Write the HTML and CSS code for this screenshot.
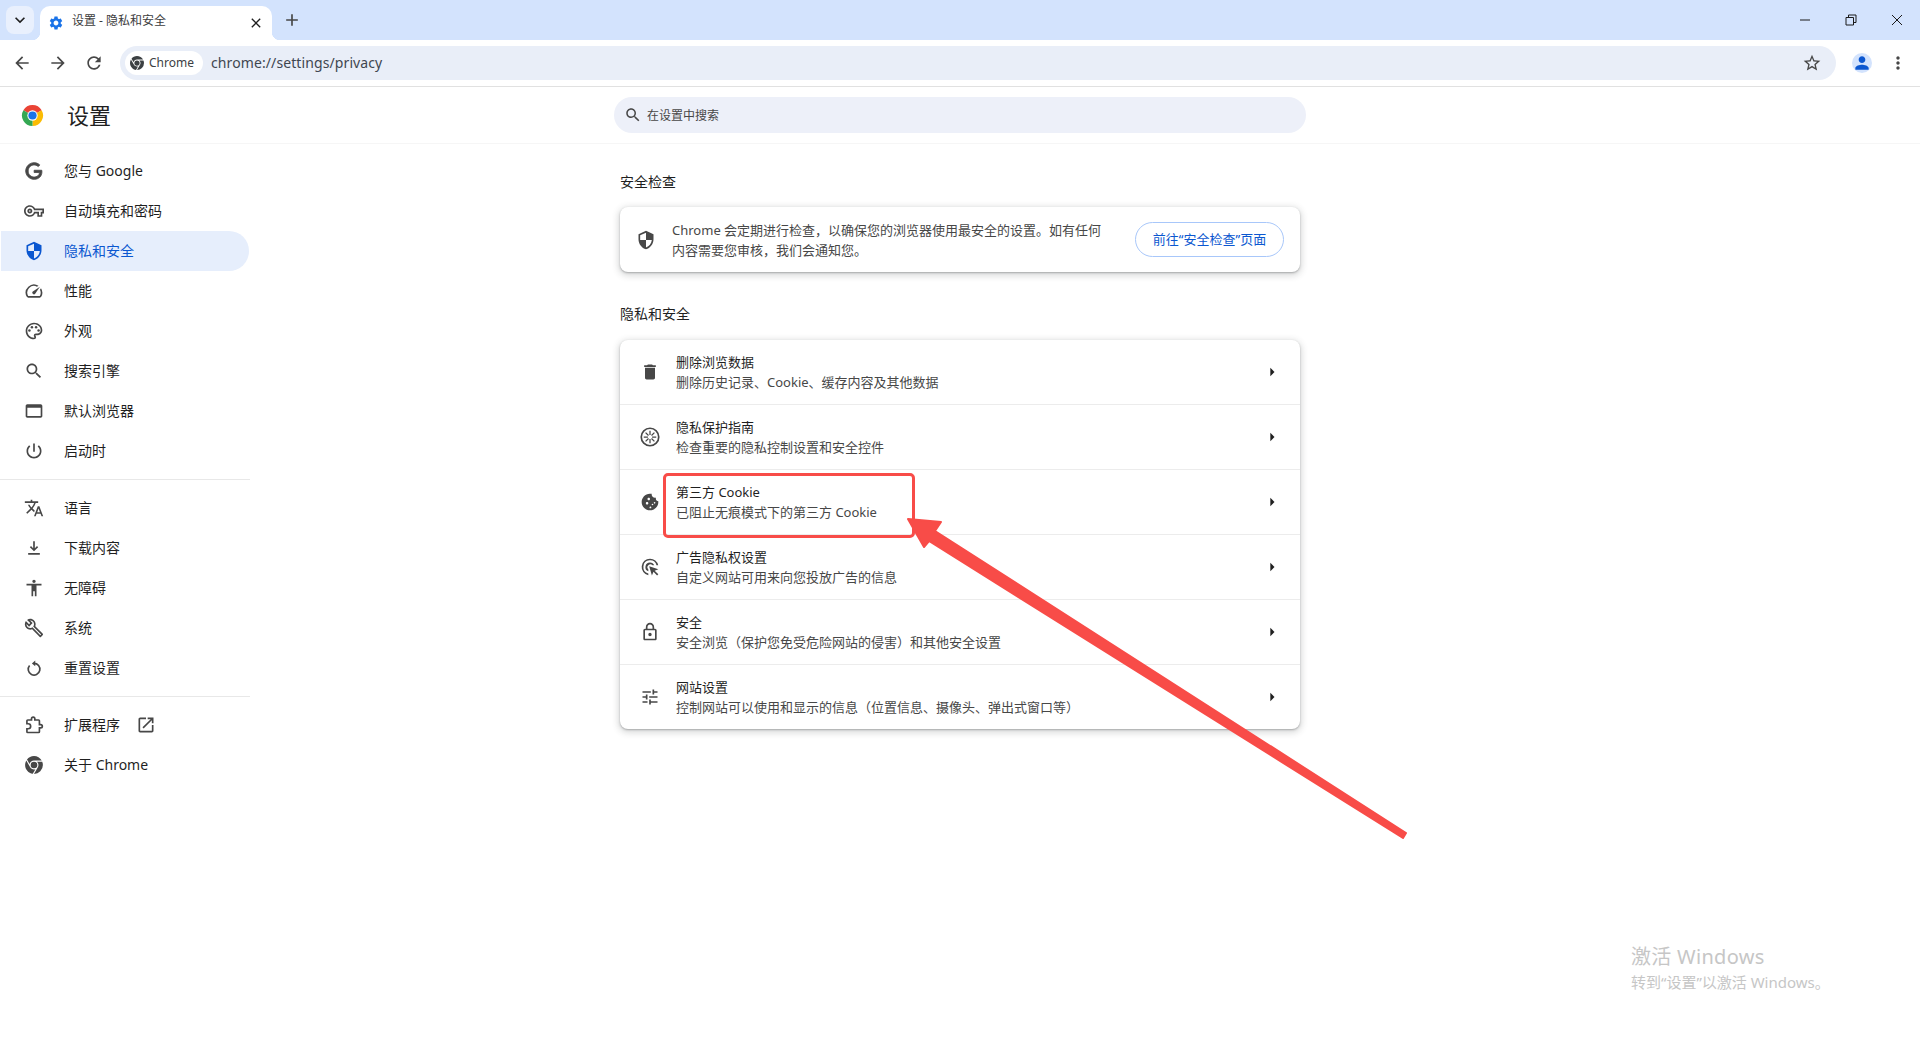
FILE: index.html
```html
<!DOCTYPE html>
<html lang="zh-CN">
<head>
    <meta charset="UTF-8">
    <title>设置 - 隐私和安全</title>
    <link rel="stylesheet" href="styles.css">
</head>
<body>
    <!-- 标签栏 -->
    <div class="tabstrip">
        <div class="tab-search">
            <svg class="icon" viewBox="0 0 24 24"><path d="M7.4 8.6 12 13.2l4.6-4.6L18 10l-6 6-6-6z"/></svg>
        </div>
        <div class="tab">
            <svg class="tab-favicon" viewBox="0 0 24 24"><path d="M19.14 12.94c.04-.3.06-.61.06-.94 0-.32-.02-.64-.07-.94l2.03-1.58c.18-.14.23-.41.12-.61l-1.92-3.32c-.12-.22-.37-.29-.59-.22l-2.39.96c-.5-.38-1.03-.7-1.62-.94l-.36-2.54c-.04-.24-.24-.41-.48-.41h-3.84c-.24 0-.43.17-.47.41l-.36 2.54c-.59.24-1.13.57-1.62.94l-2.39-.96c-.22-.08-.47 0-.59.22L2.74 8.87c-.12.21-.08.47.12.61l2.03 1.58c-.05.3-.09.63-.09.94s.02.64.07.94l-2.03 1.58c-.18.14-.23.41-.12.61l1.92 3.32c.12.22.37.29.59.22l2.39-.96c.5.38 1.03.7 1.62.94l.36 2.54c.05.24.24.41.48.41h3.84c.24 0 .44-.17.47-.41l.36-2.54c.59-.24 1.13-.56 1.62-.94l2.39.96c.22.08.47 0 .59-.22l1.92-3.32c.12-.22.07-.47-.12-.61l-2.01-1.58zM12 15.6c-1.98 0-3.6-1.62-3.6-3.6s1.62-3.6 3.6-3.6 3.6 1.62 3.6 3.6-1.62 3.6-3.6 3.6z"/></svg>
            <span class="tab-title">设置 - 隐私和安全</span>
            <svg class="tab-close" viewBox="0 0 24 24"><path d="M19 6.4 17.6 5 12 10.6 6.4 5 5 6.4l5.600 5.600L5 17.600 6.400 19l5.600-5.600 5.600 5.600 1.400-1.400-5.600-5.600z"/></svg>
        </div>
        <div class="tab-new">
            <svg class="icon" viewBox="0 0 24 24"><path d="M19 13h-6v6h-2v-6H5v-2h6V5h2v6h6z"/></svg>
        </div>
        <div class="window-controls">
            <div class="win-btn"><svg viewBox="0 0 12 12"><path d="M1 6h10"/></svg></div>
            <div class="win-btn"><svg viewBox="0 0 12 12"><path d="M1 3.500h7.500V11H1zM3.500 3.500V1H11v7.500H8.500"/></svg></div>
            <div class="win-btn"><svg viewBox="0 0 12 12"><path d="M1 1l10 10M11 1 1 11"/></svg></div>
        </div>
    </div>

    <!-- 工具栏 -->
    <div class="toolbar">
        <div class="nav-btn"><svg class="icon" viewBox="0 0 24 24"><path d="M20 11H7.830l5.590-5.590L12 4l-8 8 8 8 1.410-1.410L7.830 13H20v-2z"/></svg></div>
        <div class="nav-btn"><svg class="icon" viewBox="0 0 24 24"><path d="M12 4l-1.410 1.410L16.170 11H4v2h12.170l-5.580 5.590L12 20l8-8z"/></svg></div>
        <div class="nav-btn"><svg class="icon" viewBox="0 0 24 24"><path d="M17.650 6.350C16.200 4.900 14.210 4 12 4c-4.420 0-7.990 3.580-7.990 8s3.570 8 7.990 8c3.730 0 6.840-2.550 7.730-6h-2.080c-.82 2.330-3.040 4-5.650 4-3.310 0-6-2.690-6-6s2.690-6 6-6c1.660 0 3.140.69 4.220 1.780L13 11h7V4l-2.350 2.350z"/></svg></div>
        <div class="omnibox">
            <div class="chip">
                <svg class="chip-icon" viewBox="4 4 16 16"><path d="M12,20L15.460,14H15.450C15.790,13.410 16,12.730 16,12C16,10.800 15.460,9.730 14.620,9H19.410C19.790,9.930 20,10.940 20,12A8,8 0 0,1 12,20M4,12C4,10.540 4.390,9.180 5.070,8L8.540,14H8.550C9.240,15.190 10.500,16 12,16C12.450,16 12.880,15.910 13.290,15.770L10.890,19.910C7,19.370 4,16.040 4,12M15,12A3,3 0 0,1 12,15A3,3 0 0,1 9,12A3,3 0 0,1 12,9A3,3 0 0,1 15,12M12,4C14.960,4 17.540,5.610 18.920,8H12C10.060,8 8.450,9.380 8.080,11.210L5.700,7.080C7.140,5.210 9.430,4 12,4Z"/></svg>
                <span>Chrome</span>
            </div>
            <span class="url">chrome://settings/privacy</span>
            <svg class="icon star" viewBox="0 0 24 24"><path d="M22 9.240l-7.190-.62L12 2 9.190 8.630 2 9.240l5.460 4.730L5.820 21 12 17.270 18.180 21l-1.630-7.030L22 9.240zM12 15.400l-3.760 2.270 1-4.280-3.320-2.880 4.380-.38L12 6.100l1.710 4.040 4.380.38-3.320 2.880 1 4.280L12 15.400z"/></svg>
        </div>
        <div class="avatar"><svg viewBox="0 0 24 24"><path d="M12 12c2.210 0 4-1.790 4-4s-1.790-4-4-4-4 1.790-4 4 1.790 4 4 4zm0 2c-2.670 0-8 1.340-8 4v2h16v-2c0-2.660-5.330-4-8-4z"/></svg></div>
        <div class="nav-btn"><svg class="icon" viewBox="0 0 24 24"><path d="M12 8c1.100 0 2-.9 2-2s-.9-2-2-2-2 .9-2 2 .9 2 2 2zm0 2c-1.100 0-2 .9-2 2s.9 2 2 2 2-.9 2-2-.9-2-2-2zm0 6c-1.100 0-2 .9-2 2s.9 2 2 2 2-.9 2-2-.9-2-2-2z"/></svg></div>
    </div>

    <!-- 设置页头 -->
    <div class="settings-header">
        <div class="brand">
            <svg class="brand-logo" viewBox="0 0 24 24">
                <path fill="#ea4335" d="M12 12 2.470 6.500A11 11 0 0 1 21.530 6.500z"/>
                <path fill="#fbbc04" d="M12 12 21.530 6.500A11 11 0 0 1 12 23z"/>
                <path fill="#34a853" d="M12 12 12 23A11 11 0 0 1 2.470 6.500z"/>
                <circle cx="12" cy="12" r="5.400" fill="#fff"/>
                <circle cx="12" cy="12" r="4.300" fill="#1a73e8"/>
            </svg>
            <span class="brand-title">设置</span>
        </div>
        <div class="search">
            <svg class="search-icon" viewBox="0 0 24 24"><path d="M15.500 14h-.79l-.28-.27C15.410 12.590 16 11.110 16 9.500 16 5.910 13.090 3 9.500 3S3 5.910 3 9.500 5.910 16 9.500 16c1.610 0 3.090-.59 4.230-1.570l.27.28v.79l5 4.990L20.490 19l-4.990-5zm-6 0C7.010 14 5 11.990 5 9.500S7.010 5 9.500 5 14 7.010 14 9.500 11.990 14 9.500 14z"/></svg>
            <span class="search-text">在设置中搜索</span>
        </div>
    </div>

    <div class="page">
        <!-- 左侧菜单 -->
        <nav class="sidebar">
            <div class="menu-item">
                <svg class="icon bold" viewBox="0 0 24 24"><path d="M21.350,11.100H12.180V13.830H18.690C18.360,17.640 15.190,19.270 12.190,19.270C8.360,19.270 5,16.250 5,12C5,7.900 8.200,4.730 12.200,4.730C15.290,4.730 17.100,6.700 17.100,6.700L19,4.720C19,4.720 16.560,2 12.100,2C6.420,2 2.030,6.800 2.030,12C2.030,17.050 6.160,22 12.250,22C17.600,22 21.500,18.330 21.500,12.910C21.500,11.760 21.350,11.100 21.350,11.100V11.100Z"/></svg>
                <span>您与 Google</span>
            </div>
            <div class="menu-item">
                <svg class="icon" viewBox="0 0 24 24"><path d="M22 19h-6v-4h-2.680c-1.140 2.420-3.600 4-6.320 4-3.860 0-7-3.140-7-7s3.140-7 7-7c2.720 0 5.170 1.580 6.320 4H24v6h-2v4zm-4-2h2v-4h2v-2H11.940l-.23-.67C11.010 8.340 9.110 7 7 7c-2.760 0-5 2.240-5 5s2.240 5 5 5c2.110 0 4.010-1.340 4.710-3.330l.23-.67H18v4zM7 15c-1.650 0-3-1.350-3-3s1.350-3 3-3 3 1.350 3 3-1.350 3-3 3zm0-4c-.55 0-1 .45-1 1s.45 1 1 1 1-.45 1-1-.45-1-1-1z"/></svg>
                <span>自动填充和密码</span>
            </div>
            <div class="menu-item active">
                <svg class="icon" viewBox="0 0 24 24"><path d="M12 1 3 5v6c0 5.550 3.840 10.740 9 12 5.160-1.260 9-6.450 9-12V5l-9-4zm0 10.990h7c-.53 4.120-3.280 7.790-7 8.940V12H5V6.300l7-3.110v8.800z"/></svg>
                <span>隐私和安全</span>
            </div>
            <div class="menu-item">
                <svg class="icon" viewBox="0 0 24 24"><path d="M20.380 8.570l-1.230 1.850a8 8 0 0 1-.22 7.580H5.070A8 8 0 0 1 15.580 6.850l1.850-1.230A10 10 0 0 0 3.350 19a2 2 0 0 0 1.720 1h13.850a2 2 0 0 0 1.740-1 10 10 0 0 0-.27-10.440zM10.590 15.410a2 2 0 0 0 2.830 0l5.660-8.490-8.490 5.660a2 2 0 0 0 0 2.830z"/></svg>
                <span>性能</span>
            </div>
            <div class="menu-item">
                <svg class="icon" viewBox="0 0 24 24"><path d="M12 22C6.490 22 2 17.510 2 12S6.490 2 12 2s10 4.040 10 9c0 3.310-2.690 6-6 6h-1.770c-.28 0-.5.22-.5.5 0 .12.05.23.13.33.41.47.64 1.060.64 1.670A2.500 2.500 0 0 1 12 22zm0-18c-4.410 0-8 3.590-8 8s3.590 8 8 8c.28 0 .5-.22.5-.5a.54.54 0 0 0-.14-.35c-.41-.46-.63-1.050-.63-1.650a2.500 2.500 0 0 1 2.500-2.500H16c2.210 0 4-1.790 4-4 0-3.860-3.590-7-8-7z"/><circle cx="6.500" cy="11.500" r="1.500"/><circle cx="9.500" cy="7.500" r="1.500"/><circle cx="14.500" cy="7.500" r="1.500"/><circle cx="17.500" cy="11.500" r="1.500"/></svg>
                <span>外观</span>
            </div>
            <div class="menu-item">
                <svg class="icon" viewBox="0 0 24 24"><path d="M15.500 14h-.79l-.28-.27C15.410 12.590 16 11.110 16 9.500 16 5.910 13.090 3 9.500 3S3 5.910 3 9.500 5.910 16 9.500 16c1.610 0 3.090-.59 4.230-1.570l.27.28v.79l5 4.990L20.490 19l-4.990-5zm-6 0C7.010 14 5 11.990 5 9.500S7.010 5 9.500 5 14 7.010 14 9.500 11.990 14 9.500 14z"/></svg>
                <span>搜索引擎</span>
            </div>
            <div class="menu-item">
                <svg class="icon" viewBox="0 0 24 24"><path d="M20 4H4c-1.100 0-2 .9-2 2v12c0 1.100.9 2 2 2h16c1.100 0 2-.9 2-2V6c0-1.100-.9-2-2-2zm0 14H4V8h16v10z"/></svg>
                <span>默认浏览器</span>
            </div>
            <div class="menu-item">
                <svg class="icon" viewBox="0 0 24 24"><path d="M13 3h-2v10h2V3zm4.830 2.170l-1.420 1.420C17.990 7.860 19 9.810 19 12c0 3.870-3.130 7-7 7s-7-3.130-7-7c0-2.190 1.010-4.140 2.580-5.420L6.170 5.170C4.230 6.820 3 9.260 3 12c0 4.970 4.030 9 9 9s9-4.030 9-9c0-2.740-1.230-5.180-3.170-6.830z"/></svg>
                <span>启动时</span>
            </div>
            <div class="menu-divider"></div>
            <div class="menu-item">
                <svg class="icon" viewBox="0 0 24 24"><path d="M12.870 15.070l-2.540-2.510.03-.03c1.740-1.940 2.980-4.170 3.710-6.530H17V4h-7V2H8v2H1v1.990h11.170C11.500 7.920 10.440 9.750 9 11.350 8.070 10.320 7.300 9.190 6.690 8h-2c.73 1.630 1.730 3.170 2.980 4.560l-5.090 5.020L4 19l5-5 3.110 3.110.76-2.040zM18.500 10h-2L12 22h2l1.120-3h4.750L21 22h2l-4.500-12zm-2.620 7l1.620-4.330L19.120 17h-3.240z"/></svg>
                <span>语言</span>
            </div>
            <div class="menu-item">
                <svg class="icon" viewBox="0 0 24 24"><path d="M12 16l-5-5 1.400-1.400 2.600 2.600V4h2v8.200l2.600-2.600L17 11zM5 18h14v2H5z"/></svg>
                <span>下载内容</span>
            </div>
            <div class="menu-item">
                <svg class="icon" viewBox="0 0 24 24"><path d="M12 2c1.100 0 2 .9 2 2s-.9 2-2 2-2-.9-2-2 .9-2 2-2zm9 7h-6v13h-2v-6h-2v6H9V9H3V7h18v2z"/></svg>
                <span>无障碍</span>
            </div>
            <div class="menu-item">
                <svg class="icon" viewBox="0 0 24 24"><path d="M22.610 18.990l-9.080-9.080c.93-2.340.45-5.100-1.440-7C9.790.61 6.210.4 3.660 2.260L7.500 6.110 6.080 7.520 2.250 3.690C.39 6.230.6 9.820 2.900 12.110c1.860 1.860 4.570 2.350 6.890 1.480l9.110 9.110c.39.39 1.020.39 1.410 0l2.300-2.300c.4-.38.4-1.010 0-1.410zm-3 1.600l-9.460-9.460c-.61.45-1.290.72-2 .82-1.360.2-2.790-.21-3.830-1.250C3.370 9.760 2.930 8.500 3 7.260l3.090 3.090 4.240-4.240-3.090-3.090c1.240-.07 2.490.37 3.440 1.310 1.080 1.080 1.490 2.570 1.240 3.960-.12.71-.42 1.370-.88 1.960l9.450 9.450-.88.88z"/></svg>
                <span>系统</span>
            </div>
            <div class="menu-item">
                <svg class="icon" viewBox="0 0 24 24"><path class="reset-arc" d="M12 6.500A7 7 0 1 1 6.700 9"/><path d="M13.500 3 9.500 6.500l4 3.500z"/></svg>
                <span>重置设置</span>
            </div>
            <div class="menu-divider"></div>
            <div class="menu-item">
                <svg class="icon line" viewBox="0 0 24 24"><path d="M4.500 6H9V4.500a2 2 0 0 1 4 0V6h4.500a1 1 0 0 1 1 1v4.500H20a2 2 0 0 1 0 4h-1.500V20a1 1 0 0 1-1 1H4.500a1 1 0 0 1-1-1v-3.500H5a3 3 0 0 0 0-6H3.500V7a1 1 0 0 1 1-1z"/></svg>
                <span>扩展程序</span>
                <svg class="icon external" viewBox="0 0 24 24"><path d="M19 19H5V5h7V3H5c-1.110 0-2 .9-2 2v14c0 1.100.89 2 2 2h14c1.100 0 2-.9 2-2v-7h-2v7zM14 3v2h3.590l-9.830 9.830 1.410 1.410L19 6.410V10h2V3h-7z"/></svg>
            </div>
            <div class="menu-item">
                <svg class="icon" viewBox="3 3 18 18"><path d="M12,20L15.460,14H15.450C15.790,13.410 16,12.730 16,12C16,10.800 15.460,9.730 14.620,9H19.410C19.790,9.930 20,10.940 20,12A8,8 0 0,1 12,20M4,12C4,10.540 4.390,9.180 5.070,8L8.540,14H8.550C9.240,15.190 10.500,16 12,16C12.450,16 12.880,15.910 13.290,15.770L10.890,19.910C7,19.370 4,16.040 4,12M15,12A3,3 0 0,1 12,15A3,3 0 0,1 9,12A3,3 0 0,1 12,9A3,3 0 0,1 15,12M12,4C14.960,4 17.540,5.610 18.920,8H12C10.060,8 8.450,9.380 8.080,11.210L5.700,7.080C7.140,5.210 9.430,4 12,4Z"/></svg>
                <span>关于 Chrome</span>
            </div>
        </nav>

        <!-- 主内容 -->
        <main class="content">
            <h2 class="section-title first">安全检查</h2>
            <section class="card check-card">
                <svg class="icon" viewBox="0 0 24 24"><path d="M12 1 3 5v6c0 5.550 3.840 10.740 9 12 5.160-1.260 9-6.450 9-12V5l-9-4zm0 10.990h7c-.53 4.120-3.280 7.790-7 8.940V12H5V6.300l7-3.110v8.800z"/></svg>
                <p class="check-text">Chrome 会定期进行检查，以确保您的浏览器使用最安全的设置。如有任何内容需要您审核，我们会通知您。</p>
                <div class="check-btn">前往“安全检查”页面</div>
            </section>

            <h2 class="section-title">隐私和安全</h2>
            <section class="card">
                <div class="row">
                    <svg class="icon" viewBox="0 0 24 24"><path d="M6 19c0 1.100.9 2 2 2h8c1.100 0 2-.9 2-2V7H6v12zM19 4h-3.500l-1-1h-5l-1 1H5v2h14V4z"/></svg>
                    <div class="row-text">
                        <div class="row-title">删除浏览数据</div>
                        <div class="row-sub">删除历史记录、Cookie、缓存内容及其他数据</div>
                    </div>
                    <svg class="icon chevron" viewBox="0 0 24 24"><path d="M10 17l5-5-5-5z"/></svg>
                </div>
                <div class="row">
                    <svg class="icon line" viewBox="0 0 24 24"><circle cx="12" cy="12" r="10.500"/><path class="spokes" d="M12 4.500v5M12 14.500v5M4.500 12h5M14.500 12h5M6.700 6.700l3.500 3.500M13.800 13.800l3.500 3.500M17.300 6.700l-3.500 3.500M10.200 13.800l-3.500 3.500"/></svg>
                    <div class="row-text">
                        <div class="row-title">隐私保护指南</div>
                        <div class="row-sub">检查重要的隐私控制设置和安全控件</div>
                    </div>
                    <svg class="icon chevron" viewBox="0 0 24 24"><path d="M10 17l5-5-5-5z"/></svg>
                </div>
                <div class="row">
                    <svg class="icon" viewBox="0 0 24 24"><path d="M21.950 10.990c-1.790-.03-3.700-1.950-2.680-4.220-2.970 1-5.780-1.590-5.190-4.560C7.110.74 2 6.410 2 12c0 5.520 4.480 10 10 10 5.890 0 10.540-5.080 9.950-11.010zM8.500 15c-.83 0-1.500-.67-1.500-1.500S7.670 12 8.500 12s1.500.67 1.500 1.500S9.330 15 8.500 15zm2-5C9.670 10 9 9.330 9 8.500S9.670 7 10.500 7s1.500.67 1.500 1.500-.67 1.500-1.500 1.500zm4.500 6c-.55 0-1-.45-1-1s.45-1 1-1 1 .45 1 1-.45 1-1 1z"/><circle class="cookie-dot" cx="12.500" cy="18.500" r="1.100"/><circle class="cookie-dot" cx="17.500" cy="13" r="1"/></svg>
                    <div class="row-text">
                        <div class="row-title">第三方 Cookie</div>
                        <div class="row-sub">已阻止无痕模式下的第三方 Cookie</div>
                    </div>
                    <svg class="icon chevron" viewBox="0 0 24 24"><path d="M10 17l5-5-5-5z"/></svg>
                </div>
                <div class="row">
                    <svg class="icon" viewBox="0 0 24 24"><path d="M12 2a10 10 0 0 0-2 19.800v-2.050A8 8 0 1 1 19.800 10h2.050A10 10 0 0 0 12 2z"/><path d="M12 6.500a5.500 5.500 0 0 0-2 10.620v-2.200A3.500 3.500 0 1 1 15 10h2.100A5.500 5.500 0 0 0 12 6.500z"/><path d="M11 11l11 3.700-4.400 1.700 4.400 4.300-1.500 1.500-4.300-4.400-1.900 4.400z"/></svg>
                    <div class="row-text">
                        <div class="row-title">广告隐私权设置</div>
                        <div class="row-sub">自定义网站可用来向您投放广告的信息</div>
                    </div>
                    <svg class="icon chevron" viewBox="0 0 24 24"><path d="M10 17l5-5-5-5z"/></svg>
                </div>
                <div class="row">
                    <svg class="icon" viewBox="0 0 24 24"><path d="M18 8h-1V6c0-2.760-2.240-5-5-5S7 3.240 7 6v2H6c-1.100 0-2 .9-2 2v10c0 1.100.9 2 2 2h12c1.100 0 2-.9 2-2V10c0-1.100-.9-2-2-2zM9 6c0-1.660 1.340-3 3-3s3 1.340 3 3v2H9V6zm9 14H6V10h12v10zm-6-3c1.100 0 2-.9 2-2s-.9-2-2-2-2 .9-2 2 .9 2 2 2z"/></svg>
                    <div class="row-text">
                        <div class="row-title">安全</div>
                        <div class="row-sub">安全浏览（保护您免受危险网站的侵害）和其他安全设置</div>
                    </div>
                    <svg class="icon chevron" viewBox="0 0 24 24"><path d="M10 17l5-5-5-5z"/></svg>
                </div>
                <div class="row">
                    <svg class="icon" viewBox="0 0 24 24"><path d="M3 17v2h6v-2H3zM3 5v2h10V5H3zm10 16v-2h8v-2h-8v-2h-2v6h2zM7 9v2H3v2h4v2h2V9H7zm14 4v-2H11v2h10zm-6-4h2V7h4V5h-4V3h-2v6z"/></svg>
                    <div class="row-text">
                        <div class="row-title">网站设置</div>
                        <div class="row-sub">控制网站可以使用和显示的信息（位置信息、摄像头、弹出式窗口等）</div>
                    </div>
                    <svg class="icon chevron" viewBox="0 0 24 24"><path d="M10 17l5-5-5-5z"/></svg>
                </div>
            </section>
        </main>
    </div>

    <!-- 截图标注 -->
    <div class="mark-box"></div>
    <svg class="mark-arrow" viewBox="0 0 1920 1039">
        <polygon points="908,519 941,522 935,531 1406,833 1403,838 929,541 924,547"/>
    </svg>

    <div class="watermark">
        <div class="watermark-title">激活 Windows</div>
        <div class="watermark-sub">转到“设置”以激活 Windows。</div>
    </div>
</body>
</html>
```

FILE: styles.css
```css
* {
    margin: 0;
    padding: 0;
    box-sizing: border-box;
}

body {
    position: relative;
    height: 1039px;
    overflow: hidden;
    background: #fff;
    color: #1f1f1f;
    font-family: "Noto Sans", "Noto Sans CJK SC", sans-serif;
    font-size: 13px;
    line-height: 20px;
}

.icon {
    width: 20px;
    height: 20px;
    flex: none;
    fill: #474747;
}

.icon.line {
    fill: none;
    stroke: #474747;
    stroke-width: 2;
}

.icon.bold {
    stroke: #474747;
    stroke-width: 1;
}

.reset-arc {
    fill: none;
    stroke: #474747;
    stroke-width: 2;
}

.cookie-dot {
    fill: #fff;
}

/* tab strip */
.tabstrip {
    display: flex;
    height: 40px;
    background: #d3e3fd;
}

.tab-search {
    display: flex;
    align-items: center;
    justify-content: center;
    width: 28px;
    height: 28px;
    margin: 6px 6px 0;
    border-radius: 8px;
    background: #e9f0fd;
}

.tab-search .icon {
    fill: #1f1f1f;
}

.tab {
    position: relative;
    display: flex;
    align-items: center;
    width: 232px;
    height: 34px;
    margin-top: 6px;
    padding: 0 8px;
    border-radius: 10px 10px 0 0;
    background: #fff;
}

.tab::before,
.tab::after {
    content: "";
    position: absolute;
    bottom: 0;
    width: 8px;
    height: 8px;
}

.tab::before {
    left: -8px;
    background: radial-gradient(circle at 0 0, #d3e3fd 8px, #fff 8.5px);
}

.tab::after {
    right: -8px;
    background: radial-gradient(circle at 100% 0, #d3e3fd 8px, #fff 8.5px);
}

.tab-favicon {
    width: 16px;
    height: 16px;
    flex: none;
    fill: #1a73e8;
}

.tab-title {
    flex: 1;
    margin-left: 8px;
    padding-bottom: 4px;
    font-size: 12px;
    line-height: 16px;
    color: #3c3c3c;
}

.tab-close {
    width: 16px;
    height: 16px;
    flex: none;
    fill: #1f1f1f;
}

.tab-new {
    display: flex;
    align-items: center;
    justify-content: center;
    width: 28px;
    height: 28px;
    margin: 6px 0 0 6px;
}

.window-controls {
    display: flex;
    margin-left: auto;
}

.win-btn {
    display: flex;
    align-items: center;
    justify-content: center;
    width: 46px;
    height: 40px;
}

.win-btn svg {
    width: 12px;
    height: 12px;
    fill: none;
    stroke: #1a1a1a;
    stroke-width: 1;
}

/* toolbar */
.toolbar {
    position: relative;
    display: flex;
    align-items: center;
    height: 47px;
    padding: 0 4px 1px;
    border-bottom: 1px solid #e1e1e1;
    border-radius: 10px 10px 0 0;
    background: #fff;
}

.nav-btn {
    display: flex;
    align-items: center;
    justify-content: center;
    width: 36px;
    height: 36px;
}

.omnibox {
    display: flex;
    align-items: center;
    width: 1716px;
    height: 34px;
    margin-left: 8px;
    padding: 0 14px 0 5px;
    border-radius: 17px;
    background: #e9eef8;
}

.chip {
    display: flex;
    align-items: center;
    gap: 5px;
    width: 78px;
    height: 24px;
    padding-left: 5px;
    border-radius: 12px;
    background: #fff;
    font-size: 12px;
    color: #3c4043;
}

.chip-icon {
    width: 14px;
    height: 14px;
    fill: #3c4043;
}

.url {
    flex: 1;
    margin-left: 8px;
    font-size: 14px;
    letter-spacing: 0.1px;
    color: #3f4650;
}

.star {
    fill: #474747;
}

.avatar {
    display: flex;
    align-items: center;
    justify-content: center;
    width: 20px;
    height: 20px;
    margin: 0 0 0 16px;
    border-radius: 50%;
    background: #d3e3fd;
}

.avatar svg {
    width: 20px;
    height: 20px;
    flex: none;
    fill: #0b57d0;
}

.avatar + .nav-btn {
    margin-left: 8px;
}

/* settings header */
.settings-header {
    display: grid;
    grid-template-columns: 1fr 692px 1fr;
    align-items: center;
    height: 57px;
    border-bottom: 1px solid #f6f6f6;
}

.brand {
    display: flex;
    align-items: center;
    padding-left: 21px;
}

.brand-logo {
    width: 23px;
    height: 23px;
}

.brand-title {
    margin-left: 23px;
    font-size: 22px;
    line-height: 30px;
    color: #1f1f1f;
}

.search {
    display: flex;
    align-items: center;
    height: 36px;
    padding-left: 10px;
    border-radius: 18px;
    background: #edf0f9;
    font-size: 12px;
    color: #474747;
}

.search-icon {
    width: 18px;
    height: 18px;
    margin-right: 5px;
    fill: #474747;
}

.search-text {
    padding-top: 2px;
}

/* layout */
.page {
    display: grid;
    grid-template-columns: 1fr 680px 1fr;
}

.sidebar {
    padding-top: 7px;
    width: 250px;
}

.menu-item {
    display: flex;
    align-items: center;
    width: 248px;
    height: 40px;
    margin-left: 1px;
    padding-left: 23px;
    border-radius: 0 20px 20px 0;
    font-size: 14px;
    color: #1f1f1f;
}

.menu-item > span {
    margin-left: 20px;
}

.menu-item.active {
    background: #e6eefc;
    color: #0b57d0;
}

.menu-item.active .icon {
    fill: #0b57d0;
}

.menu-item .external {
    margin-left: 16px;
}

.menu-divider {
    height: 1px;
    margin: 8px 0;
    background: #e8e8e8;
}

/* content */
.content {
    grid-column: 2;
}

.section-title {
    height: 40px;
    margin-top: 22px;
    margin-bottom: 6px;
    font-size: 14px;
    font-weight: 400;
    line-height: 40px;
    color: #1f1f1f;
}

.section-title.first {
    margin-top: 18px;
    margin-bottom: 5px;
}

.card {
    border-radius: 8px;
    background: #fff;
    box-shadow: 0 1px 2px rgba(60, 64, 67, 0.35), 0 2px 6px 2px rgba(60, 64, 67, 0.18);
}

.check-card {
    display: flex;
    align-items: center;
    height: 65px;
    padding: 0 16px;
}

.check-text {
    width: 436px;
    margin-left: 16px;
    color: #474747;
    font-size: 13px;
}

.check-btn {
    width: 149px;
    height: 35px;
    margin-left: auto;
    border: 1px solid #a8c7fa;
    border-radius: 18px;
    font-size: 13px;
    line-height: 33px;
    text-align: center;
    color: #0b57d0;
}

.row {
    display: flex;
    align-items: center;
    height: 65px;
    padding: 0 18px 0 20px;
    border-top: 1px solid #ececec;
}

.row:first-child {
    height: 64px;
    border-top: none;
}

.row-text {
    flex: 1;
    margin-left: 16px;
}

.row-title {
    color: #1f1f1f;
}

.row-sub {
    color: #474747;
}

.chevron {
    fill: #1f1f1f;
}

.spokes {
    stroke-width: 1.5;
}

/* red markup over the screenshot */
.mark-box {
    position: absolute;
    left: 663px;
    top: 473px;
    width: 252px;
    height: 65px;
    border: 3px solid #f84c48;
    border-radius: 5px;
}

.mark-arrow {
    position: absolute;
    left: 0;
    top: 0;
    width: 1920px;
    height: 1039px;
    fill: #f84c48;
    stroke: #f84c48;
    stroke-width: 2;
    stroke-linejoin: round;
}

.watermark {
    position: absolute;
    left: 1631px;
    top: 942px;
    color: #c6c6c6;
}

.watermark-title {
    font-size: 20px;
    line-height: 30px;
    letter-spacing: 0.3px;
}

.watermark-sub {
    font-size: 15px;
    line-height: 20px;
}
```
